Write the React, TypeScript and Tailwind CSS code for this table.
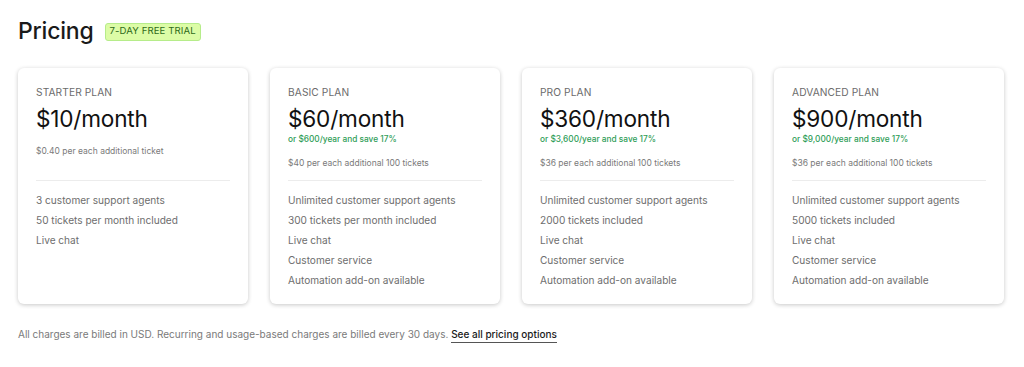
const plans = [
  {
    name: 'Starter plan',
    price: '$10/month',
    yearly: '',
    extra: '$0.40 per each additional ticket',
    features: ['3 customer support agents', '50 tickets per month included', 'Live chat'],
  },
  {
    name: 'Basic plan',
    price: '$60/month',
    yearly: 'or $600/year and save 17%',
    extra: '$40 per each additional 100 tickets',
    features: [
      'Unlimited customer support agents',
      '300 tickets per month included',
      'Live chat',
      'Customer service',
      'Automation add-on available',
    ],
  },
  {
    name: 'Pro plan',
    price: '$360/month',
    yearly: 'or $3,600/year and save 17%',
    extra: '$36 per each additional 100 tickets',
    features: [
      'Unlimited customer support agents',
      '2000 tickets included',
      'Live chat',
      'Customer service',
      'Automation add-on available',
    ],
  },
  {
    name: 'Advanced plan',
    price: '$900/month',
    yearly: 'or $9,000/year and save 17%',
    extra: '$36 per each additional 100 tickets',
    features: [
      'Unlimited customer support agents',
      '5000 tickets included',
      'Live chat',
      'Customer service',
      'Automation add-on available',
    ],
  },
]

export default function App() {
  return (
    <div className="w-[1024px] h-[367px] bg-white px-[18px] pt-[16px] font-['Inter',sans-serif] text-[#1a1a1a]">
      <div className="flex items-center gap-[11px] h-[30px]">
        <h1 className="text-[23px] leading-[30px] font-medium tracking-[-0.2px]">Pricing</h1>
        <span className="mt-[1px] px-[4px] h-[18px] flex items-center rounded-[3px] border border-[#b6ec8a] bg-[#dcfca6] text-[9.6px] text-[#2f6b1a] tracking-[0.1px]">
          7-DAY FREE TRIAL
        </span>
      </div>

      <div className="mt-[22px] flex gap-[22px]">
        {plans.map(plan => (
          <div
            key={plan.name}
            className="w-[230px] rounded-[6px] bg-white px-[18px] pt-[16px] pb-[14px] shadow-[0_1px_4px_rgba(0,0,0,0.22)]"
          >
            <div className="h-[96px]">
              <div className="text-[10.2px] leading-[16px] uppercase text-[#6b6b6b] tracking-[0.1px]">{plan.name}</div>
              <div className="mt-[5px] text-[22.6px] leading-[28px] text-[#111] tracking-[-0.2px]">{plan.price}</div>
              {plan.yearly && (
                <div className="text-[8.3px] leading-[12px] font-medium text-[#2e9d57]">{plan.yearly}</div>
              )}
              <div className="mt-[12px] text-[8.5px] leading-[12px] text-[#7a7a7a]">{plan.extra}</div>
            </div>
            <div className="border-t border-[#ececec]" />
            <ul className="mt-[9px]">
              {plan.features.map(f => (
                <li key={f} className="text-[10.1px] leading-[20px] text-[#6e6e6e]">
                  {f}
                </li>
              ))}
            </ul>
          </div>
        ))}
      </div>

      <p className="mt-[22px] text-[10px] leading-[16px] text-[#7a7a7a]">
        All charges are billed in USD. Recurring and usage-based charges are billed every 30 days.{' '}
        <a className="font-medium text-[#1a1a1a] border-b border-[#555] pb-[2px]">See all pricing options</a>
      </p>
    </div>
  )
}
